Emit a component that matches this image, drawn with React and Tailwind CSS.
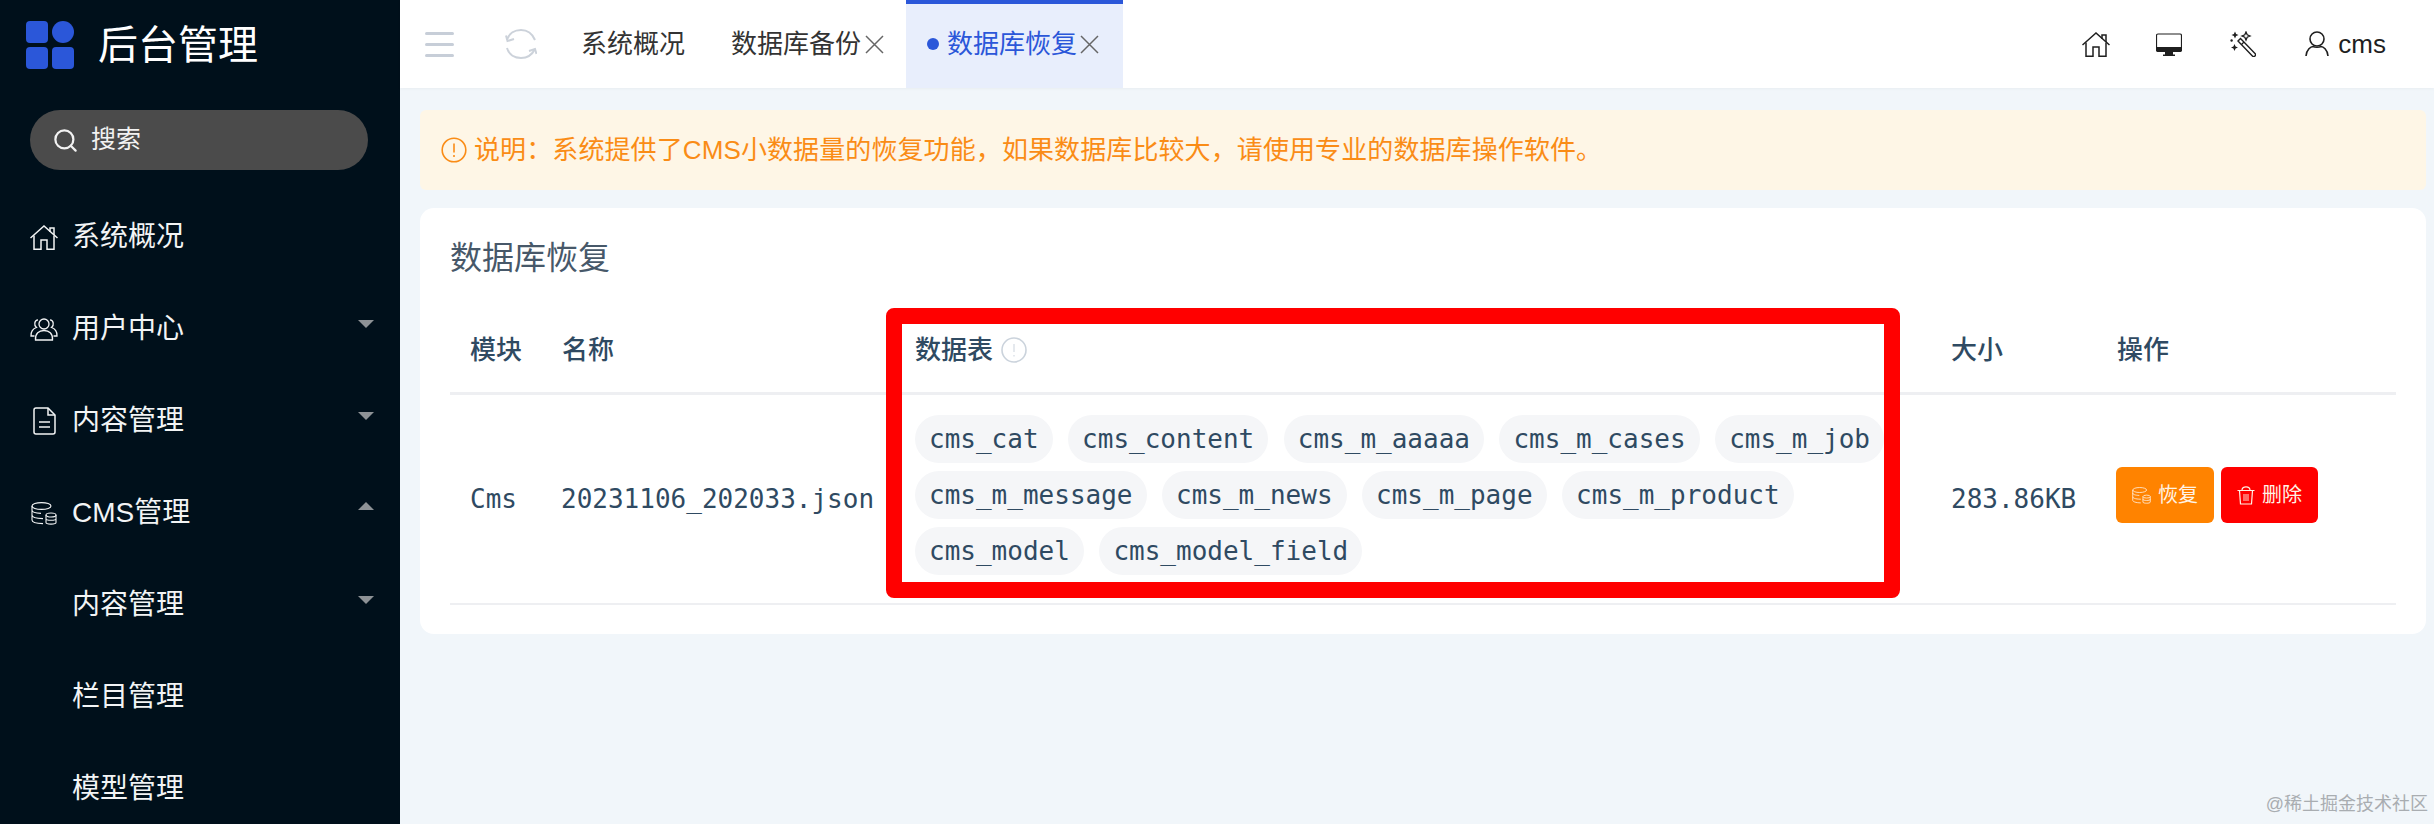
import { Search } from 'lucide-react';

const chips = [
  'cms_cat', 'cms_content', 'cms_m_aaaaa', 'cms_m_cases', 'cms_m_job',
  'cms_m_message', 'cms_m_news', 'cms_m_page', 'cms_m_product',
  'cms_model', 'cms_model_field',
];

const HomeIcon = ({ className }) => (
  <svg viewBox="0 0 28 25" fill="none" stroke="currentColor" strokeWidth="1.5" className={className}>
    <path d="M0.5 13 L14 1 L27.5 13" />
    <path d="M20 7 V3 H24 V10" />
    <path d="M4 10.5 V24.2 H11 V15 H17 V24.2 H24 V10.5" />
  </svg>
);

const UsersIcon = ({ className }) => (
  <svg viewBox="0 0 28 23" fill="none" stroke="currentColor" strokeWidth="1.3" className={className}>
    <circle cx="14" cy="6" r="5" />
    <path d="M5.5 22 C5 15.5 9 12.5 14 12.5 C19 12.5 23 15.5 22.5 22 Z" />
    <path d="M8 1.8 C4.5 2 3.5 7 6.5 9.5 C3 10.5 0.6 14 1 18 H4.5" />
    <path d="M20 1.8 C23.5 2 24.5 7 21.5 9.5 C25 10.5 27.4 14 27 18 H23.5" />
  </svg>
);

const FileIcon = ({ className }) => (
  <svg viewBox="0 0 23 28" fill="none" stroke="currentColor" strokeWidth="1.5" className={className}>
    <path d="M3 1 H15 L22 8 V25 A2 2 0 0 1 20 27 H3 A2 2 0 0 1 1 25 V3 A2 2 0 0 1 3 1 Z" />
    <path d="M15 1 V8 H22" />
    <path d="M6 15 H17 M6 20 H17" />
  </svg>
);

const DbIcon = ({ className }) => (
  <svg viewBox="0 0 26 23" fill="none" stroke="currentColor" strokeWidth="1.1" className={className}>
    <ellipse cx="10.5" cy="4" rx="9.5" ry="3.4" />
    <path d="M1 4 V8 C1 10 4 11.2 10 11.4 M1 8 V13 C1 15 4 16.4 12 16.6 M1 13 V18 C1 20 5 21.4 12 21.6" />
    <ellipse cx="20" cy="13" rx="5" ry="2" />
    <path d="M15 13 V20.5 C15 22.6 25 22.6 25 20.5 V13 M15 16.8 C15 18.8 25 18.8 25 16.8" />
  </svg>
);

// tab close cross, the lucide X comes out too small here
const CloseIcon = ({ className }) => (
  <svg viewBox="0 0 19 19" fill="none" stroke="#666666" strokeWidth="1.5" className={className}>
    <path d="M1 1 L18 18 M18 1 L1 18" />
  </svg>
);

const Logo = () => (
  <div className="grid w-12 grid-cols-2 gap-[4px]">
    <div className="h-[22px] rounded-[4px] bg-[#2b57d9]" />
    <div className="h-[22px] rounded-full bg-[#2b57d9]" />
    <div className="h-[22px] rounded-[4px] bg-[#2b57d9]" />
    <div className="h-[22px] rounded-[4px] bg-[#2b57d9]" />
  </div>
);

const MenuItem = ({ icon, label, arrow }) => (
  <div className="relative flex h-[92px] shrink-0 items-center text-[28px] text-[#f2f4f5]">
    <div className="flex w-[72px] justify-center pl-[16px]">{icon}</div>
    <span>{label}</span>
    {arrow === 'down' && (
      <div className="absolute left-[358px] top-[37px] h-0 w-0 border-x-[8px] border-t-[8px] border-x-transparent border-t-[#8d9296]" />
    )}
    {arrow === 'up' && (
      <div className="absolute left-[358px] top-[35px] h-0 w-0 border-x-[8px] border-b-[8px] border-x-transparent border-b-[#8d9296]" />
    )}
  </div>
);

const Sidebar = () => (
  <aside className="flex h-[824px] w-[400px] shrink-0 flex-col overflow-hidden bg-[#00101b]">
    <div className="flex h-[92px] shrink-0 items-center pb-[2px] pl-[26px]">
      <Logo />
      <span className="ml-[24px] text-[40px] leading-none text-white">后台管理</span>
    </div>
    <div className="ml-[30px] mr-[32px] mt-[18px] flex h-[60px] shrink-0 items-center rounded-full bg-[#4b4b4b] pl-[22px] text-[#f2f2f2]">
      <Search size={27} strokeWidth={2} />
      <span className="ml-[12px] text-[25px]">搜索</span>
    </div>
    <div className="mt-[21px] flex flex-col">
      <MenuItem icon={<HomeIcon className="h-[25px] w-[28px]" />} label="系统概况" />
      <MenuItem icon={<UsersIcon className="h-[23px] w-[28px]" />} label="用户中心" arrow="down" />
      <MenuItem icon={<FileIcon className="h-[28px] w-[23px]" />} label="内容管理" arrow="down" />
      <MenuItem icon={<DbIcon className="h-[23px] w-[26px]" />} label="CMS管理" arrow="up" />
      <MenuItem label="内容管理" arrow="down" />
      <MenuItem label="栏目管理" />
      <MenuItem label="模型管理" />
    </div>
  </aside>
);

const TopBar = () => (
  <header className="flex h-[88px] shrink-0 items-stretch bg-white text-[26px] shadow-[0_1px_3px_rgba(0,0,0,0.04)]">
    {/* Hamburger */}
    <div className="ml-[25px] flex w-[29px] flex-col justify-center gap-[8px]">
      <div className="h-[3px] rounded-full bg-[#c7ced8]" />
      <div className="h-[3px] rounded-full bg-[#c7ced8]" />
      <div className="h-[3px] rounded-full bg-[#c7ced8]" />
    </div>
    {/* Refresh */}
    <div className="ml-[50px] flex items-center">
      <svg viewBox="0 0 33 30" fill="none" stroke="#ccd2da" strokeWidth="2" className="h-[30px] w-[33px]">
        <path d="M3 11 C5 4 11 1 17 1 C23 1 28 4 31 11" />
        <path d="M3 19 C5 26 11 29 17 29 C23 29 28 26 31 20" />
        <path d="M2 6.5 L3.5 12 L10 10" />
        <path d="M25 22 L31 20 L32.5 25" />
      </svg>
    </div>
    <div className="ml-[44px] flex items-center text-[#333333]">系统概况</div>
    <div className="ml-[46px] flex items-center text-[#333333]">
      数据库备份
      <CloseIcon className="ml-[4px] h-[19px] w-[19px]" />
    </div>
    <div className="ml-[22px] flex w-[217px] items-center border-t-[4px] border-[#2b57d9] bg-[#e8eefc] pb-[4px] pl-[21px] text-[#2b57d9]">
      <div className="mr-[8px] h-[12px] w-[12px] rounded-full bg-[#2b57d9]" />
      数据库恢复
      <CloseIcon className="ml-[3px] h-[19px] w-[19px]" />
    </div>
    <div className="ml-auto flex items-center pr-[48px] text-[#1f1f1f]">
      <HomeIcon className="h-[25px] w-[28px]" />
      <svg viewBox="0 0 26 23" className="ml-[46px] h-[23px] w-[26px]">
        <path d="M2 1 H24 A1.5 1.5 0 0 1 25.5 2.5 V17 A1.5 1.5 0 0 1 24 18.5 H2 A1.5 1.5 0 0 1 0.5 17 V2.5 A1.5 1.5 0 0 1 2 1 Z" fill="none" stroke="currentColor" strokeWidth="1.2" />
        <path d="M0.5 14 H25.5 V17 A2 2 0 0 1 23.5 19 H2.5 A2 2 0 0 1 0.5 17 Z M9 19 H17 V21.5 H19 V23 H7 V21.5 H9 Z" fill="currentColor" />
      </svg>
      <svg viewBox="0 0 26 26" fill="none" stroke="currentColor" className="ml-[48px] h-[26px] w-[26px]">
        <path d="M8 10 L10.5 7.5 L25 22.5 A1.8 1.8 0 0 1 22.4 25 Z" strokeWidth="1.4" />
        <path d="M11.5 13.5 L14 11" strokeWidth="1.2" />
        <path d="M16 1 L17.2 3.8 L20 5 L17.2 6.2 L16 9 L14.8 6.2 L12 5 L14.8 3.8 Z" strokeWidth="1.3" />
        <path d="M5 0.5 L6.1 2.9 L8.5 4 L6.1 5.1 L5 7.5 L3.9 5.1 L1.5 4 L3.9 2.9 Z" fill="currentColor" stroke="none" />
        <path d="M4.5 13 L5.6 15.4 L8 16.5 L5.6 17.6 L4.5 20 L3.4 17.6 L1 16.5 L3.4 15.4 Z" fill="currentColor" stroke="none" />
        <circle cx="1.6" cy="9.5" r="1.2" fill="currentColor" stroke="none" />
      </svg>
      <svg viewBox="0 0 24 26" fill="none" stroke="currentColor" strokeWidth="1.6" className="ml-[49px] h-[26px] w-[24px]">
        <circle cx="12" cy="8" r="7" />
        <path d="M1 25 C1.5 18.5 6 15.5 8 15.5 C10 16.5 14 16.5 16 15.5 C18 15.5 22.5 18.5 23 25" />
      </svg>
      <span className="ml-[9px] font-['Liberation_Sans',sans-serif]">cms</span>
    </div>
  </header>
);

const Notice = () => (
  <div className="flex h-[80px] items-center rounded-[6px] bg-[#fef6e6] pl-[21px] text-[26px] text-[#fa8c16]">
    <svg viewBox="0 0 26 26" fill="none" stroke="currentColor" strokeWidth="1.6" className="h-[26px] w-[26px]">
      <circle cx="13" cy="13" r="11.8" />
      <path d="M13 6.5 V15.5" />
      <path d="M13 18 V20" />
    </svg>
    <span className="ml-[7px] tracking-[0.1px]">说明：系统提供了CMS小数据量的恢复功能，如果数据库比较大，请使用专业的数据库操作软件。</span>
  </div>
);

const RestoreTable = () => (
  <div className="relative">
    <table className="w-full table-fixed border-separate border-spacing-0 text-left text-[26px] text-[#2f4a62]">
      <thead>
        <tr>
          <th className="h-[87px] w-[93px] border-b-[3px] border-[#eeeff2] pl-[20px] font-medium">模块</th>
          <th className="w-[352px] border-b-[3px] border-[#eeeff2] pl-[19px] font-medium">名称</th>
          <th className="w-[1037px] border-b-[3px] border-[#eeeff2] pl-[20px] font-medium">
            <div className="flex items-center">
              数据表
              <svg viewBox="0 0 26 26" fill="none" className="ml-[8px] h-[26px] w-[26px]">
                <circle cx="13" cy="13" r="12" stroke="#cbd3dc" strokeWidth="1.6" />
                <path d="M13 7 V15 M13 18 V19.5" stroke="#dfe4ea" strokeWidth="1.6" />
              </svg>
            </div>
          </th>
          <th className="w-[165px] border-b-[3px] border-[#eeeff2] pl-[19px] font-medium">大小</th>
          <th className="border-b-[3px] border-[#eeeff2] pl-[20px] font-medium">操作</th>
        </tr>
      </thead>
      <tbody className="font-['DejaVu_Sans_Mono',monospace]">
        <tr>
          <td className="h-[210px] border-b-2 border-[#eeeff2] pl-[20px]">Cms</td>
          <td className="border-b-2 border-[#eeeff2] pl-[18px]">20231106_202033.json</td>
          <td className="border-b-2 border-[#eeeff2] px-[20px]">
            <div className="flex flex-wrap gap-x-[15.5px] gap-y-2 pb-2">
              {chips.map((c) => (
                <span key={c} className="flex h-[48px] items-center rounded-full bg-[#f5f6f8] px-[14px]">{c}</span>
              ))}
            </div>
          </td>
          <td className="border-b-2 border-[#eeeff2] pl-[19px]">283.86KB</td>
          <td className="border-b-2 border-[#eeeff2] pl-[19px]">
            <div className="flex gap-[7px] pb-2 font-['Liberation_Sans','Noto_Sans_CJK_SC',sans-serif] text-[20px] text-[#fff3e6]">
              <button className="flex h-[56px] w-[98px] items-center justify-center gap-[7px] rounded-[6px] bg-[#ff8300]">
                <DbIcon className="h-[17px] w-[19px]" />
                恢复
              </button>
              <button className="flex h-[56px] w-[97px] items-center justify-center gap-[7px] rounded-[6px] bg-[#ff0000]">
                <svg viewBox="0 0 18 19" fill="none" stroke="currentColor" strokeWidth="1.2" className="h-[19px] w-[18px]">
                  <path d="M0.5 4.5 H17.5 M5 4 C5 -0.3 13 -0.3 13 4" />
                  <path d="M2.5 4.5 L3.5 18 H14.5 L15.5 4.5" />
                  <path d="M7 8 V15 M9 8 V15 M11 8 V15" strokeWidth="0.9" />
                </svg>
                删除
              </button>
            </div>
          </td>
        </tr>
      </tbody>
    </table>
    {/* red annotation box drawn on top of the screenshot */}
    <div className="pointer-events-none absolute left-[436px] top-0 h-[290px] w-[1014px] rounded-lg border-[16px] border-[#ff0000]" />
  </div>
);

export default function App() {
  return (
    <div className="relative flex h-[824px] w-[2434px] overflow-hidden bg-[#f1f6fa] font-['Liberation_Sans','Noto_Sans_CJK_SC',sans-serif]">
      <Sidebar />
      <main className="flex min-w-0 flex-1 flex-col">
        <TopBar />
        <div className="flex flex-col gap-[18px] pl-[20px] pr-[8px] pt-[22px]">
          <Notice />
          <section className="h-[426px] rounded-[14px] bg-white px-[30px] pt-[30px]">
            <h2 className="mb-[30px] h-[40px] text-[32px] leading-[40px] text-[#475869]">数据库恢复</h2>
            <RestoreTable />
          </section>
        </div>
      </main>
      <div className="absolute bottom-[6px] right-[6px] text-[18px] text-[#a9adb1]">@稀土掘金技术社区</div>
    </div>
  );
}
